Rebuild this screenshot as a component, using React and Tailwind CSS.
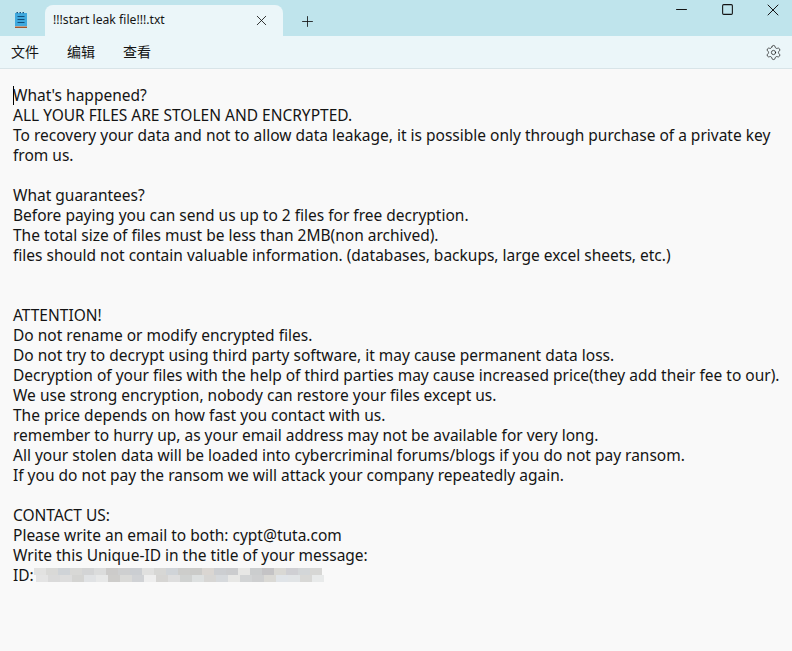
import React from 'react';
import { Minus, Square, X, Plus, Settings } from 'lucide-react';

const lines = [
  "What's happened?",
  'ALL YOUR FILES ARE STOLEN AND ENCRYPTED.',
  'To recovery your data and not to allow data leakage, it is possible only through purchase of a private key',
  'from us.',
  '',
  'What guarantees?',
  'Before paying you can send us up to 2 files for free decryption.',
  'The total size of files must be less than 2MB(non archived).',
  'files should not contain valuable information. (databases, backups, large excel sheets, etc.)',
  '',
  '',
  'ATTENTION!',
  'Do not rename or modify encrypted files.',
  'Do not try to decrypt using third party software, it may cause permanent data loss.',
  'Decryption of your files with the help of third parties may cause increased price(they add their fee to our).',
  'We use strong encryption, nobody can restore your files except us.',
  'The price depends on how fast you contact with us.',
  'remember to hurry up, as your email address may not be available for very long.',
  'All your stolen data will be loaded into cybercriminal forums/blogs if you do not pay ransom.',
  'If you do not pay the ransom we will attack your company repeatedly again.',
  '',
  'CONTACT US:',
  'Please write an email to both: cypt@tuta.com',
  'Write this Unique-ID in the title of your message:',
];

// blurred ID, two rows of blocks
const mosaicTop = [
  'bg-[#e2e2e1]', 'bg-[#d9d9d7]', 'bg-[#cfd3d7]', 'bg-[#d8d8d6]', 'bg-[#d3d4d5]', 'bg-[#dbdcdc]', 'bg-[#cccbca]', 'bg-[#cecfd0]',
  'bg-[#cbced2]', 'bg-[#e0e0df]', 'bg-[#d7d7d5]', 'bg-[#d0d4d8]', 'bg-[#cdcdcb]', 'bg-[#cbcbc9]', 'bg-[#dad6d2]', 'bg-[#ccced1]',
  'bg-[#cbccce]', 'bg-[#e7e7e5]', 'bg-[#cbcdce]', 'bg-[#c4c3c5]', 'bg-[#d9d8d4]', 'bg-[#cfcfd3]', 'bg-[#d3d6d8]', 'bg-[#d7d7d5]',
];
const mosaicBottom = [
  'bg-[#e4e4e4]', 'bg-[#dadada]', 'bg-[#dddddd]', 'bg-[#d4d4d2]', 'bg-[#e0e2e4]', 'bg-[#e7e8e8]', 'bg-[#cecdcb]', 'bg-[#dadad8]',
  'bg-[#d0d2d5]', 'bg-[#eeeeee]', 'bg-[#d6d5d3]', 'bg-[#dedede]', 'bg-[#d0d2d1]', 'bg-[#dde0e0]', 'bg-[#d7d6d4]', 'bg-[#d6d9dc]',
  'bg-[#e7e7e5]', 'bg-[#d2d4d5]', 'bg-[#cecfd0]', 'bg-[#dad9d5]', 'bg-[#e0e4e8]', 'bg-[#e1e4e6]', 'bg-[#d8d8d6]', 'bg-[#e8eaea]',
];

function NotepadIcon() {
  return (
    <svg width="12" height="16" viewBox="0 0 12 16">
      <rect x="0" y="1" width="12" height="13.5" fill="#3fa9de" />
      <path d="M1.5 0.5h1.5M4.5 0.5h1.5M7.5 0.5h1.5" stroke="#15527f" strokeWidth="1.4" />
      <path d="M2.5 4.5h7M2.5 7.5h7M2.5 10.5h7" stroke="#0f4f7c" strokeWidth="1" />
      <rect x="0" y="14" width="12" height="0.8" fill="#e6d8c8" />
      <rect x="0" y="14.6" width="12" height="1.4" fill="#a4552c" />
    </svg>
  );
}

export default function App() {
  return (
    <div className="w-[792px] h-[651px] flex flex-col overflow-hidden bg-[#f9f9f9] font-['Noto_Sans','Noto_Sans_CJK_SC',sans-serif] text-[#141414]">
      {/* Title bar */}
      <div className="h-9 shrink-0 bg-[#bfe4ec] flex items-end">
        <div className="w-[45px] h-full flex items-center justify-center pr-[3px] pt-1">
          <NotepadIcon />
        </div>
        <div className="w-[238px] h-[31px] bg-[#ebf6f9] rounded-t-lg flex items-center pl-2 pr-[13px]">
          <span className="text-[12.2px] flex-1 whitespace-nowrap">!!!start leak file!!!.txt</span>
          <X size={17} strokeWidth={1.2} />
        </div>
        <div className="w-12 h-full flex items-center justify-center pt-1.5">
          <Plus size={17} strokeWidth={1.2} />
        </div>
        <div className="flex-1 h-full flex justify-end items-start -mr-1">
          <div className="w-[46px] h-[19px] flex items-center justify-center"><Minus size={17} strokeWidth={1.5} /></div>
          <div className="w-[46px] h-[19px] flex items-center justify-center"><Square size={13} strokeWidth={2} /></div>
          <div className="w-[46px] h-[19px] flex items-center justify-center"><X size={20} strokeWidth={1.2} /></div>
        </div>
      </div>
      {/* Menu bar */}
      <div className="h-[33px] shrink-0 bg-[#ebf6f9] border-b border-[#d8e4e8] flex items-center pl-[11px] pr-[10px] text-sm">
        <span className="w-14">文件</span>
        <span className="w-14">编辑</span>
        <span className="flex-1">查看</span>
        <Settings size={17} strokeWidth={1} />
      </div>
      {/* Text content */}
      <div className="relative flex-1 pt-4 pl-[13px] text-[15.5px] leading-5 whitespace-nowrap">
        <div className="absolute left-[13px] top-[17px] w-px h-[19px] bg-black" />
        {lines.map((line, i) => (
          <div key={i} className="h-5">{line}</div>
        ))}
        <div className="h-5 flex items-center">
          <span>ID:</span>
          <div className="flex flex-col">
            <div className="flex h-[7px]">
              {mosaicTop.map((c, i) => (
                <div key={i} className={`w-3 h-full ${c}`} />
              ))}
            </div>
            <div className="flex h-[7px] ml-0.5">
              {mosaicBottom.map((c, i) => (
                <div key={i} className={`w-3 h-full ${c}`} />
              ))}
            </div>
          </div>
        </div>
      </div>
    </div>
  );
}
